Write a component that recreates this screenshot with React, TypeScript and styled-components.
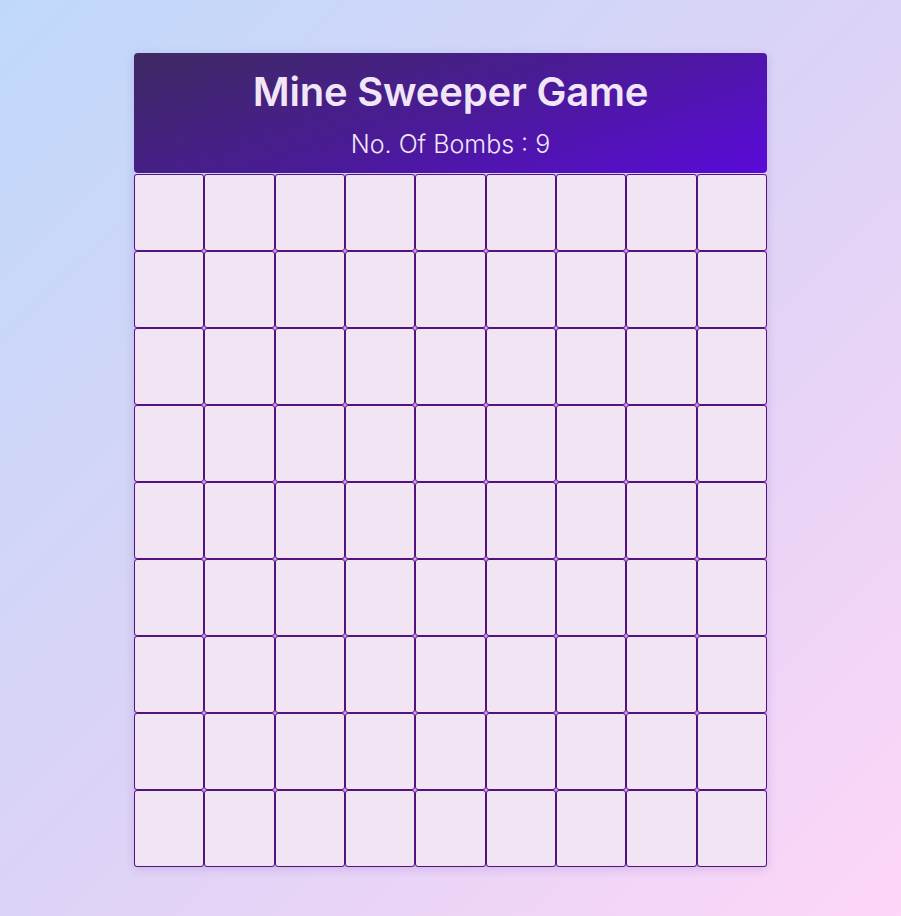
import React from "react";
import styled, { createGlobalStyle } from "styled-components";

const GlobalStyle = createGlobalStyle`
  html, body {
    margin: 0;
    padding: 0;
  }
  body {
    min-height: 916px;
    background: linear-gradient(135deg, #c0d9fa 0%, #dcd3f6 50%, #fdd6f8 100%);
    font-family: "Inter", "Noto Sans", sans-serif;
  }
`;

const Page = styled.div`
  display: flex;
  justify-content: center;
  padding-top: 53px;
`;

const Board = styled.div`
  width: 633px;
  display: flex;
  flex-direction: column;
  box-shadow: 0 2px 10px rgba(90, 40, 160, 0.18);
  border-radius: 4px;
`;

const Header = styled.header`
  height: 120px;
  box-sizing: border-box;
  border-radius: 4px;
  background: linear-gradient(160deg, #3e2a62 0%, #4a1b96 50%, #5a0ad9 100%);
  display: flex;
  flex-direction: column;
  align-items: center;
  padding-top: 14px;
  color: #f1e6f7;
`;

const Title = styled.h1`
  margin: 0;
  font-size: 40px;
  font-weight: 600;
  letter-spacing: -0.2px;
  line-height: 50px;
`;

const Subtitle = styled.div`
  margin-top: 12px;
  font-size: 25px;
  font-weight: 300;
  line-height: 30px;
`;

const Grid = styled.div`
  display: grid;
  grid-template-columns: repeat(9, 1fr);
  grid-auto-rows: 77px;
  margin-top: 1px;
  background: #c9a6ee;
`;

const Cell = styled.button`
  box-sizing: border-box;
  margin: 0;
  padding: 0;
  border: 1px solid #52127f;
  border-radius: 3px;
  background: #f1e5f4;
  cursor: pointer;
`;

export default function App() {
  const cells = Array.from({ length: 81 }, (_, i) => i);
  return (
    <>
      <GlobalStyle />
      <Page>
        <Board>
          <Header>
            <Title>Mine Sweeper Game</Title>
            <Subtitle>No. Of Bombs : 9</Subtitle>
          </Header>
          <Grid>
            {cells.map((i) => (
              <Cell key={i} aria-label={`cell ${i + 1}`} />
            ))}
          </Grid>
        </Board>
      </Page>
    </>
  );
}
